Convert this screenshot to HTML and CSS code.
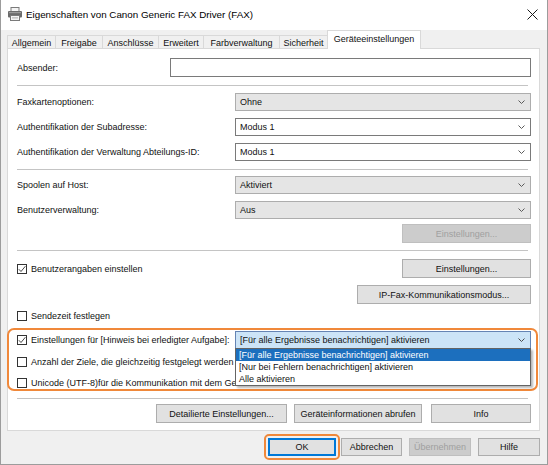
FILE: index.html
```html
<!DOCTYPE html>
<html lang="de">
<head>
<meta charset="utf-8">
<title>Eigenschaften von Canon Generic FAX Driver (FAX)</title>
<link rel="stylesheet" href="styles.css">
</head>
<body>
<div class="window">
  <div class="titlebar">
    <svg class="app-icon" width="16" height="16" viewBox="0 0 16 16">
      <rect x="4" y="1.5" width="8" height="4" fill="#f4f4f4" stroke="#7a7a7a"/>
      <rect x="1" y="5" width="14" height="6.5" rx="1" fill="#6b6b6b"/>
      <rect x="2" y="6" width="12" height="1.2" fill="#9a9a9a"/>
      <rect x="3.5" y="9.5" width="9" height="5" fill="#f4f4f4" stroke="#7a7a7a"/>
      <rect x="5" y="11.5" width="6" height="0.8" fill="#9a9a9a"/>
    </svg>
    <span class="title">Eigenschaften von Canon Generic FAX Driver (FAX)</span>
    <svg class="close" width="11" height="11" viewBox="0 0 11 11">
      <path d="M0.5 0.5 L10.5 10.5 M10.5 0.5 L0.5 10.5" stroke="#1a1a1a" stroke-width="1"/>
    </svg>
  </div>

  <div class="tabs">
    <div class="tab t-allg">Allgemein</div>
    <div class="tab t-frei">Freigabe</div>
    <div class="tab t-ansch">Anschlüsse</div>
    <div class="tab t-erw">Erweitert</div>
    <div class="tab t-farb">Farbverwaltung</div>
    <div class="tab t-sich">Sicherheit</div>
    <div class="tab active">Geräteeinstellungen</div>
  </div>

  <div class="panel">
    <div class="row h19 mt9">
      <span class="label">Absender:</span>
      <div class="textbox"></div>
    </div>
    <div class="sep mt8"></div>

    <div class="row mt7">
      <span class="label">Faxkartenoptionen:</span>
      <div class="combo ro"><span>Ohne</span><svg class="chev" width="7" height="4" viewBox="0 0 7 4"><polyline points="0.5,0.5 3.5,3.5 6.5,0.5" fill="none" stroke="#5a5a5a"/></svg></div>
    </div>
    <div class="row mt7">
      <span class="label">Authentifikation der Subadresse:</span>
      <div class="combo"><span>Modus 1</span><svg class="chev" width="7" height="4" viewBox="0 0 7 4"><polyline points="0.5,0.5 3.5,3.5 6.5,0.5" fill="none" stroke="#5a5a5a"/></svg></div>
    </div>
    <div class="row mt7">
      <span class="label">Authentifikation der Verwaltung Abteilungs-ID:</span>
      <div class="combo"><span>Modus 1</span><svg class="chev" width="7" height="4" viewBox="0 0 7 4"><polyline points="0.5,0.5 3.5,3.5 6.5,0.5" fill="none" stroke="#5a5a5a"/></svg></div>
    </div>
    <div class="sep mt8"></div>

    <div class="row mt6">
      <span class="label">Spoolen auf Host:</span>
      <div class="combo ro"><span>Aktiviert</span><svg class="chev" width="7" height="4" viewBox="0 0 7 4"><polyline points="0.5,0.5 3.5,3.5 6.5,0.5" fill="none" stroke="#5a5a5a"/></svg></div>
    </div>
    <div class="row mt7">
      <span class="label">Benutzerverwaltung:</span>
      <div class="combo ro"><span>Aus</span><svg class="chev" width="7" height="4" viewBox="0 0 7 4"><polyline points="0.5,0.5 3.5,3.5 6.5,0.5" fill="none" stroke="#5a5a5a"/></svg></div>
    </div>
    <div class="row h19 mt5 end">
      <div class="btn disabled w-einst">Einstellungen...</div>
    </div>
    <div class="sep mt7"></div>

    <div class="row h19 mt8">
      <label class="check"><span class="box checked"><svg width="8" height="8" viewBox="0 0 8 8"><polyline points="0.8,4.2 3,6.5 7.4,1.2" fill="none" stroke="#333" stroke-width="0.9"/></svg></span>Benutzerangaben einstellen</label>
      <div class="btn w-einst">Einstellungen...</div>
    </div>
    <div class="row h19 mt7 end">
      <div class="btn w-ipfax">IP-Fax-Kommunikationsmodus...</div>
    </div>
    <div class="row h12 mt6">
      <label class="check"><span class="box"></span>Sendezeit festlegen</label>
    </div>

    <div class="notify-group">
      <div class="row">
        <label class="check"><span class="box checked"><svg width="8" height="8" viewBox="0 0 8 8"><polyline points="0.8,4.2 3,6.5 7.4,1.2" fill="none" stroke="#333" stroke-width="0.9"/></svg></span>Einstellungen für [Hinweis bei erledigter Aufgabe]:</label>
        <div class="combo-wrap">
          <div class="combo open"><span>[Für alle Ergebnisse benachrichtigen] aktivieren</span><svg class="chev" width="7" height="4" viewBox="0 0 7 4"><polyline points="0.5,0.5 3.5,3.5 6.5,0.5" fill="none" stroke="#4a4a4a"/></svg></div>
          <ul class="dropdown">
            <li class="selected">[Für alle Ergebnisse benachrichtigen] aktivieren</li>
            <li>[Nur bei Fehlern benachrichtigen] aktivieren</li>
            <li>Alle aktivieren</li>
          </ul>
        </div>
      </div>
      <div class="row h13 mt6">
        <label class="check"><span class="box"></span>Anzahl der Ziele, die gleichzeitig festgelegt werden</label>
      </div>
      <div class="row h13 mt8">
        <label class="check"><span class="box"></span>Unicode (UTF-8)für die Kommunikation mit dem Gerät verwenden</label>
      </div>
    </div>

    <div class="sep mt7"></div>
    <div class="row h19 mt5 end">
      <div class="btn w-detail">Detailierte Einstellungen...</div>
      <div class="btn w-info-get">Geräteinformationen abrufen</div>
      <div class="btn w-info">Info</div>
    </div>
  </div>

  <div class="footer">
    <div class="btn default w-ok">OK</div>
    <div class="btn w-cancel">Abbrechen</div>
    <div class="btn disabled w-apply">Übernehmen</div>
    <div class="btn w-help">Hilfe</div>
  </div>
</div>
</body>
</html>
```

FILE: styles.css
```css
* { box-sizing: border-box; }
html, body { margin: 0; padding: 0; }
body {
  width: 548px;
  height: 465px;
  overflow: hidden;
  font-family: "Liberation Sans", Arial, sans-serif;
  font-size: 9px;
  color: #111;
  background: #f0f0f0;
}

.window {
  width: 548px;
  height: 465px;
  border: 1px solid #9c9c9c;
  border-top: none;
  background: #f0f0f0;
  display: flex;
  flex-direction: column;
}

/* title bar */
.titlebar {
  height: 30px;
  flex: none;
  background: #fff;
  display: flex;
  align-items: center;
  padding: 0 9px 0 6px;
}
.app-icon { flex: none; margin-top: -2px; }
.title {
  flex: 1;
  margin-left: 3px;
  font-size: 9.8px;
  color: #000;
  margin-top: -2px;
}
.close { flex: none; margin-top: -2px; }

/* tabs */
.tabs {
  height: 18px;
  flex: none;
  display: flex;
  align-items: flex-end;
  margin-left: 6px;
  position: relative;
  z-index: 2;
}
.tab {
  height: 13px;
  border: 1px solid #d9d9d9;
  border-bottom: none;
  margin-right: -1px;
  background: #f0f0f0;
  display: flex;
  align-items: center;
  justify-content: center;
  padding-top: 1px;
  white-space: nowrap;
}
.t-allg { width: 49px; }
.t-frei { width: 48px; }
.t-ansch { width: 57px; }
.t-erw { width: 46px; }
.t-farb { width: 77px; }
.t-sich { width: 49px; }
.tab.active {
  width: 94px;
  height: 19px;
  margin-bottom: -1px;
  background: #fff;
  padding-top: 0;
  padding-bottom: 3px;
}

/* panel */
.panel {
  margin-left: 6px;
  width: 533px;
  height: 383px;
  flex: none;
  border: 1px solid #d9d9d9;
  background: #fff;
  padding: 0 8px 0 9px;
  position: relative;
}

.row {
  display: flex;
  align-items: center;
  justify-content: space-between;
  height: 18px;
}
.row.end { justify-content: flex-end; }
.h19 { height: 19px; }
.h13 { height: 13px; }
.h12 { height: 12px; }
.mt5 { margin-top: 5px; }
.mt6 { margin-top: 6px; }
.mt7 { margin-top: 7px; }
.mt8 { margin-top: 8px; }
.mt9 { margin-top: 9px; }

.label { white-space: nowrap; }

.sep {
  height: 1px;
  background: #c4c4c4;
  margin-right: 3px;
}

.textbox {
  width: 361px;
  height: 19px;
  border: 1px solid #7a7a7a;
  background: #fff;
}

.combo {
  width: 296px;
  height: 18px;
  border: 1px solid #7a7a7a;
  background: #fff;
  display: flex;
  align-items: center;
  justify-content: space-between;
  padding: 0 5px 0 4px;
  white-space: nowrap;
}
.combo.ro { background: #e5e5e5; border-color: #adadad; }
.combo.open { background: #cce4f7; border-color: #6584b4; }
.chev { flex: none; }

.combo-wrap { position: relative; }
.dropdown {
  position: absolute;
  top: 17px;
  left: 0;
  width: 296px;
  margin: 0;
  padding: 0;
  list-style: none;
  background: #fff;
  border: 1px solid #646464;
  box-shadow: 2px 2px 2px rgba(0, 0, 0, 0.28);
  z-index: 5;
}
.dropdown li {
  height: 12px;
  line-height: 12px;
  padding-left: 3px;
  white-space: nowrap;
}
.dropdown li.selected { background: #1c6fbe; color: #fff; }

/* buttons */
.btn {
  height: 19px;
  border: 1px solid #adadad;
  background: #e1e1e1;
  display: flex;
  align-items: center;
  justify-content: center;
  white-space: nowrap;
}
.btn.disabled { background: #cccccc; border-color: #bfbfbf; color: #a0a0a0; }
.w-einst { width: 129px; }
.w-ipfax { width: 174px; }
.w-detail { width: 131px; }
.w-info-get { width: 128px; margin-left: 7px; }
.w-info { width: 100px; margin-left: 9px; }

/* checkboxes */
.check {
  display: flex;
  align-items: center;
  white-space: nowrap;
}
.box {
  width: 10px;
  height: 10px;
  border: 1px solid #333;
  background: #fff;
  margin-right: 4px;
  display: flex;
  align-items: center;
  justify-content: center;
  flex: none;
}

/* highlighted group */
.notify-group {
  margin-top: 6px;
  margin-left: -10px;
  width: 531px;
  height: 63px;
  border: 2px solid #f0883a;
  border-radius: 7px;
  padding: 1px 5px 0 8px;
  position: relative;
}

/* footer buttons */
.footer {
  margin-top: 7px;
  height: 18px;
  display: flex;
  justify-content: flex-end;
  padding-right: 7px;
}
.footer .btn { height: 18px; }
.w-ok { width: 68px; }
.w-cancel { width: 61px; margin-left: 5px; }
.w-apply { width: 62px; margin-left: 7px; }
.w-help { width: 62px; margin-left: 7px; }
.btn.default {
  border-color: #0078d7;
  box-shadow: inset 0 0 0 1px #0078d7;
  position: relative;
}
.btn.default::after {
  content: "";
  position: absolute;
  left: -5px;
  right: -5px;
  top: -5px;
  bottom: -5px;
  border: 2px solid #f0883a;
  border-radius: 5px;
}
```
